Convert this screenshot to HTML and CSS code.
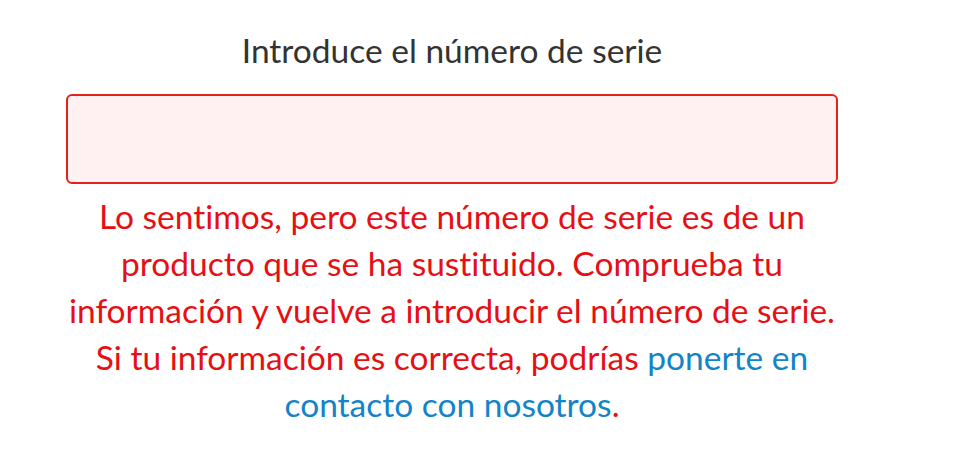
FILE: index.html
```html
<!DOCTYPE html>
<html lang="es">
<head>
  <meta charset="UTF-8" />
  <meta name="viewport" content="width=device-width, initial-scale=1.0"/>
  <title>Número de serie</title>
  <link rel="stylesheet" href="styles.css">
</head>
<body>
  <main class="serial-form">
    <label for="serial" class="serial-label">Introduce el número de serie</label>
    <input id="serial" class="serial-input is-error" type="text" aria-invalid="true">
    <p class="serial-error">
      Lo sentimos, pero este número de serie es de un producto que se ha sustituido.
      Comprueba tu información y vuelve a introducir el número de serie.
      Si tu información es correcta, podrías <a href="#contact">ponerte en contacto con nosotros</a>.
    </p>
  </main>
</body>
</html>
```

FILE: styles.css
```css
body {
  font-family: Lato, "Liberation Sans", sans-serif;
  font-variant-ligatures: none;
  margin: 0;
  padding: 0;
  background: #fff;
}
.serial-form {
  width: 772px;
  margin-left: 66px;
  padding-top: 28px;
  display: flex;
  flex-direction: column;
  align-items: center;
}
.serial-label {
  font-size: 33.5px;
  line-height: 44px;
  color: #333;
}
.serial-input {
  box-sizing: border-box;
  width: 100%;
  height: 90px;
  margin: 22px 0 0;
  border: 2px solid #e2231a;
  border-radius: 6px;
  background-color: #fff0f2;
  outline: none;
}
.serial-error {
  margin: 9px -8px 0;
  font-size: 33.5px;
  line-height: 47px;
  text-align: center;
  color: #e60f14;
}
.serial-error a {
  color: #1384c8;
  text-decoration: none;
}
```
